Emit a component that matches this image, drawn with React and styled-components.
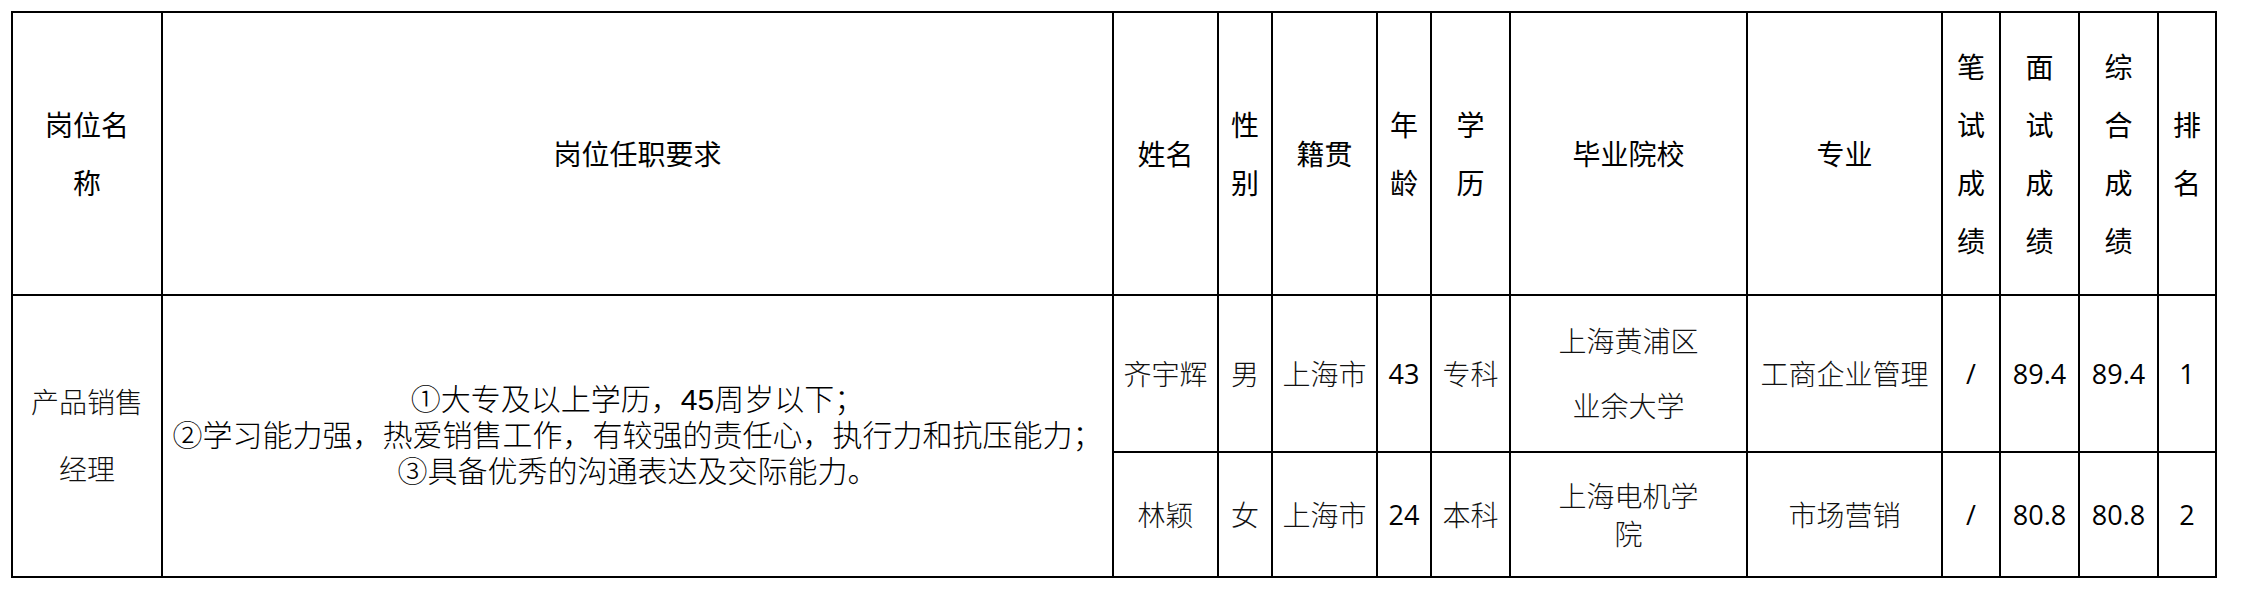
import React from 'react';
import styled, { createGlobalStyle } from 'styled-components';

const GlobalStyle = createGlobalStyle`
  html, body {
    margin: 0;
    padding: 0;
    background: #fff;
  }
  body {
    font-family: "Open Sans", "Noto Sans CJK SC", sans-serif;
    color: #000;
  }
`;

const columns = [150, 951, 105, 54, 105, 54, 79, 237, 195, 58, 79, 79, 58];

const headers = [
  ['岗位名', '称'],
  ['岗位任职要求'],
  ['姓名'],
  ['性', '别'],
  ['籍贯'],
  ['年', '龄'],
  ['学', '历'],
  ['毕业院校'],
  ['专业'],
  ['笔', '试', '成', '绩'],
  ['面', '试', '成', '绩'],
  ['综', '合', '成', '绩'],
  ['排', '名'],
];

const requirements = [
  '①大专及以上学历，45周岁以下；',
  '②学习能力强，热爱销售工作，有较强的责任心，执行力和抗压能力；',
  '③具备优秀的沟通表达及交际能力。',
];

const candidates = [
  {
    name: '齐宇辉',
    gender: '男',
    origin: '上海市',
    age: '43',
    edu: '专科',
    school: ['上海黄浦区', '业余大学'],
    schoolLine: 65,
    major: '工商企业管理',
    written: '/',
    interview: '89.4',
    total: '89.4',
    rank: '1',
    height: 157,
  },
  {
    name: '林颖',
    gender: '女',
    origin: '上海市',
    age: '24',
    edu: '本科',
    school: ['上海电机学', '院'],
    schoolLine: 38,
    major: '市场营销',
    written: '/',
    interview: '80.8',
    total: '80.8',
    rank: '2',
    height: 125,
  },
];

const Page = styled.div`
  padding: 11px 0 14px 11px;
`;

const Table = styled.table`
  border-collapse: collapse;
  table-layout: fixed;
  width: 2204px;
`;

const Col = styled.col`
  width: ${(p) => p.$w}px;
`;

const Row = styled.tr`
  height: ${(p) => p.$h}px;
`;

const HeadCell = styled.th`
  border: 2px solid #000;
  padding: 0 2px;
  text-align: center;
  vertical-align: middle;
  font-weight: normal;
  font-size: 28px;
  line-height: 58px;
  color: #000;
`;

const Cell = styled.td`
  border: 2px solid #000;
  padding: 0 2px;
  text-align: center;
  vertical-align: middle;
  font-size: 28px;
  font-weight: 300;
  line-height: ${(p) => p.$lh || 36}px;
  color: #111;
  white-space: nowrap;
`;

const NumCell = styled(Cell)`
  font-size: 27px;
  font-weight: 400;
  color: #000;
`;

const Line = styled.div`
  display: block;
`;

const Requirements = styled(Cell)`
  font-family: "Liberation Sans", "Noto Sans CJK SC", sans-serif;
  font-size: 30px;
  line-height: 36px;
  color: #000;
`;

const App = () => (
  <Page>
    <GlobalStyle />
    <Table>
      <colgroup>
        {columns.map((w, i) => (
          <Col key={i} $w={w} />
        ))}
      </colgroup>
      <thead>
        <Row $h={283}>
          {headers.map((lines, i) => (
            <HeadCell key={i}>
              {lines.map((l, j) => (
                <Line key={j}>{l}</Line>
              ))}
            </HeadCell>
          ))}
        </Row>
      </thead>
      <tbody>
        {candidates.map((c, i) => (
          <Row key={c.name} $h={c.height}>
            {i === 0 && (
              <>
                <Cell rowSpan={2} $lh={67}>
                  <Line>产品销售</Line>
                  <Line>经理</Line>
                </Cell>
                <Requirements rowSpan={2}>
                  {requirements.map((text, j) => (
                    <Line key={j}>{text}</Line>
                  ))}
                </Requirements>
              </>
            )}
            <Cell>{c.name}</Cell>
            <Cell>{c.gender}</Cell>
            <Cell>{c.origin}</Cell>
            <NumCell>{c.age}</NumCell>
            <Cell>{c.edu}</Cell>
            <Cell $lh={c.schoolLine}>
              {c.school.map((s, j) => (
                <Line key={j}>{s}</Line>
              ))}
            </Cell>
            <Cell>{c.major}</Cell>
            <NumCell>{c.written}</NumCell>
            <NumCell>{c.interview}</NumCell>
            <NumCell>{c.total}</NumCell>
            <NumCell>{c.rank}</NumCell>
          </Row>
        ))}
      </tbody>
    </Table>
  </Page>
);

export default App;
